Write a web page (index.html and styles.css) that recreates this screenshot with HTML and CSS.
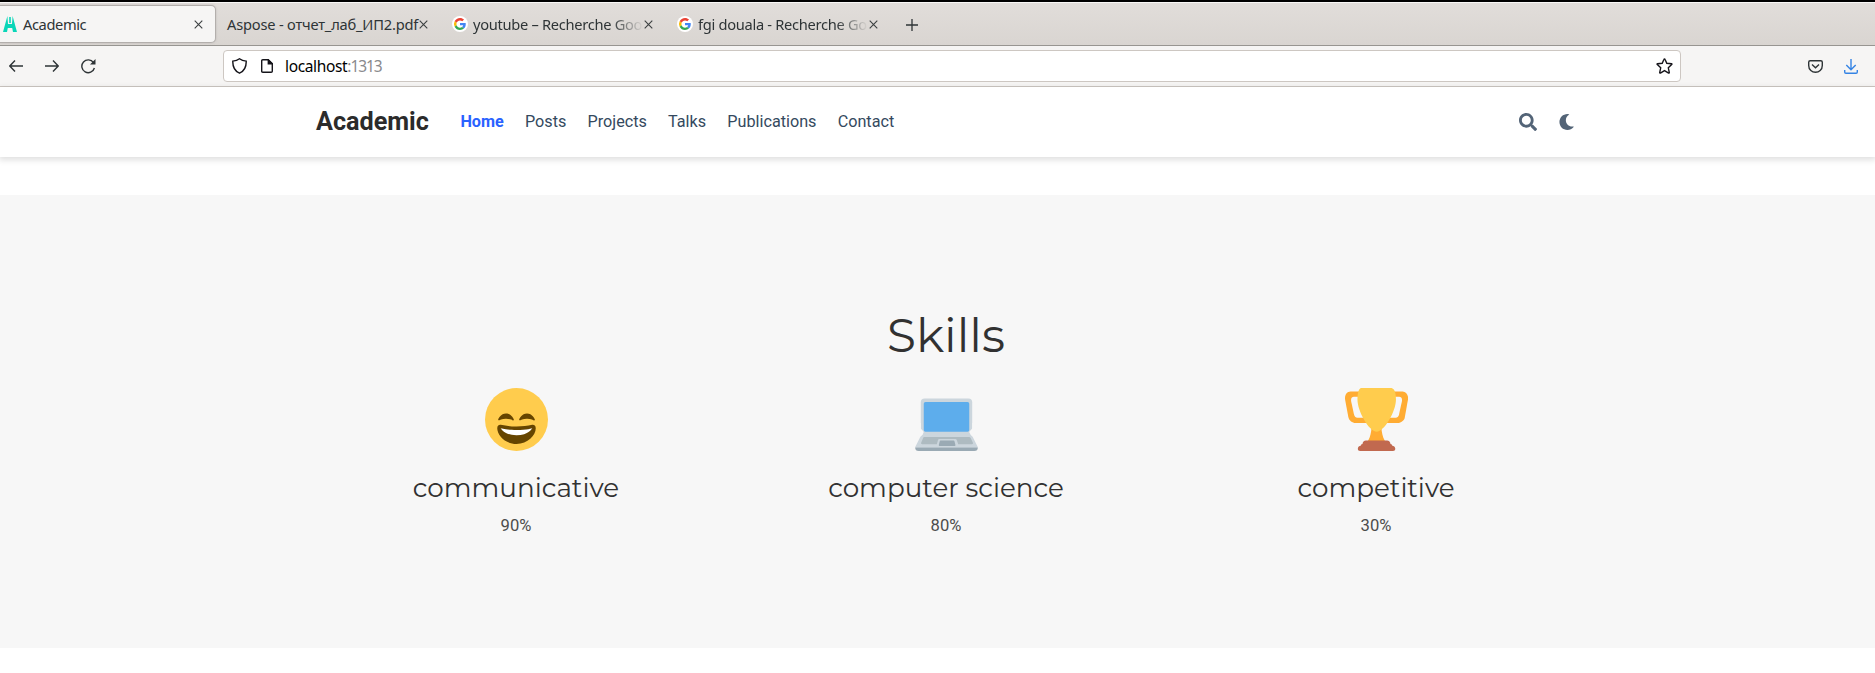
FILE: index.html
```html
<!DOCTYPE html>
<html lang="en">
<head>
<meta charset="utf-8">
<title>Academic</title>
<link rel="stylesheet" href="styles.css">
</head>
<body>
<svg width="0" height="0" class="defs">
  <symbol id="x" viewBox="0 0 9 9"><path d="M.7.7l7.6 7.6M8.3.7L.7 8.3" fill="none" stroke="#3b3f40" stroke-width="1.1"/></symbol>
  <symbol id="google" viewBox="0 0 16 16"><circle cx="8" cy="8" r="8" fill="#fff"/><g transform="translate(2 2) scale(.25)"><path fill="#ea4335" d="M24 9.5c3.5 0 6.700 1.200 9.200 3.600l6.900-6.900C35.900 2.400 30.500 0 24 0 14.600 0 6.500 5.400 2.600 13.200l8 6.200C12.400 13.700 17.700 9.500 24 9.500z"/><path fill="#4285f4" d="M47 24.500c0-1.600-.2-3.100-.4-4.500H24v9h12.900c-.6 3-2.300 5.500-4.800 7.200l7.700 6C44.400 38 47 31.800 47 24.500z"/><path fill="#fbbc05" d="M10.500 28.600a14.500 14.500 0 010-9.200l-8-6.200a24 24 0 000 21.600z"/><path fill="#34a853" d="M24 48c6.500 0 11.900-2.100 15.900-5.800l-7.700-6C30 37.600 27.200 38.500 24 38.500c-6.300 0-11.600-4.200-13.500-9.900l-8 6.200C6.500 42.600 14.600 48 24 48z"/></g></symbol>
</svg>

<header class="tabs">
  <div class="tab active">
    <svg class="fav" width="14" height="16" viewBox="0 0 14 16"><path fill="#0ad6b8" d="M4.400 0L5 8h4l.6-8L14 16h-4l-.8-4H4.800L4 16H0zM6.200 1h1.600v6H6.200z"/></svg>
    <span class="title t1">Academic</span>
    <svg class="close" width="9" height="9"><use href="#x"/></svg>
  </div>
  <div class="tab second"><span class="title t2">Aspose - отчет_лаб_ИП2.pdf</span><svg class="close" width="9" height="9"><use href="#x"/></svg></div>
  <div class="tab third"><svg class="fav" width="16" height="16"><use href="#google"/></svg><span class="title fade t3">youtube – Recherche Goog</span><svg class="close" width="9" height="9"><use href="#x"/></svg></div>
  <div class="tab fourth"><svg class="fav" width="16" height="16"><use href="#google"/></svg><span class="title fade t4">fgi douala - Recherche Go</span><svg class="close" width="9" height="9"><use href="#x"/></svg></div>
  <svg class="plus" width="12" height="12" viewBox="0 0 12 12"><path d="M6 0v12M0 6h12" stroke="#2e3436" stroke-width="1.3"/></svg>
</header>

<div class="toolbar">
  <div class="history">
    <svg width="14" height="12" viewBox="0 0 14 12"><path d="M14 6H1M6 .6L.8 6 6 11.400"/></svg>
    <svg width="14" height="12" viewBox="0 0 14 12"><path d="M0 6h13M8 .6L13.200 6 8 11.400"/></svg>
    <svg width="15" height="15" viewBox="0 0 15 15"><path d="M12.500 3.600A6.400 6.400 0 1 0 13.400 9"/><path d="M14.500 0v5.500H9z" fill="#2e3436" stroke="none"/></svg>
  </div>
  <div class="address">
    <svg width="15" height="16" viewBox="0 0 15 16"><path d="M7.500.8C5.500 2.400 3.200 3 .8 3.100c-.2 5.600 1.900 10 6.700 12.100 4.800-2.100 6.900-6.500 6.700-12.100C11.800 3 9.500 2.400 7.500.8z"/></svg>
    <svg class="page-icon" width="12" height="14" viewBox="0 0 12 14"><path d="M1.800.7H7l4.300 4.200v7.300q0 1.100-1.100 1.100H1.800Q.7 13.300.7 12.200V1.800Q.7.7 1.800.7z"/><path d="M6.600 0H7.500L12 4.500V5.400H6.600z" fill="#15141a" stroke="none"/></svg>
    <span class="url">localhost<span class="port">:1313</span></span>
    <svg class="star" width="17" height="16" viewBox="0 0 17 16"><path d="M8.500 1q.4 0 .6.500L10.800 5.300l4.700.5q.8.200.2.800l-3.400 3.200 1 4.700q0 .8-.7.500L8.500 12.600 4.400 15q-.7.300-.7-.5l1-4.700L1.300 6.600Q.7 6 1.500 5.800l4.700-.5L7.900 1.500Q8.100 1 8.500 1z"/></svg>
  </div>
  <div class="actions">
    <svg width="15" height="13" viewBox="0 0 15 13"><path d="M2.200.7h10.600q1.500 0 1.500 1.500v3.200c0 9.200-13.600 9.200-13.600 0V2.200Q.7.7 2.200.7z"/><path d="M4 4.500l3.500 3.300L11 4.500"/></svg>
    <svg class="download" width="14" height="15" viewBox="0 0 14 15"><path d="M7 0v10.500M2.300 6L7 10.700 11.700 6M.7 11v2q0 1.200 1.200 1.200h10.200q1.200 0 1.200-1.200v-2"/></svg>
  </div>
</div>

<nav class="navbar">
  <a class="brand">Academic</a>
  <div class="links"><a class="current">Home</a><a>Posts</a><a>Projects</a><a>Talks</a><a>Publications</a><a>Contact</a></div>
  <div class="tools">
    <svg width="18" height="18" viewBox="0 0 512 512"><path d="M505 442.700L405.300 343c-4.500-4.500-10.600-7-17-7H372c27.600-35.300 44-79.700 44-128C416 93.100 322.900 0 208 0S0 93.100 0 208s93.100 208 208 208c48.300 0 92.700-16.400 128-44v16.300c0 6.400 2.500 12.500 7 17l99.700 99.700c9.400 9.400 24.600 9.400 33.900 0l28.300-28.300c9.400-9.400 9.400-24.600.1-34zM208 336c-70.700 0-128-57.200-128-128 0-70.700 57.200-128 128-128 70.700 0 128 57.200 128 128 0 70.700-57.200 128-128 128z"/></svg>
    <svg class="moon" width="16" height="16" viewBox="27 0 485 512"><path d="M283.200 512c79 0 151.100-35.900 198.900-94.800 7.100-8.700-.6-21.500-11.600-19.400-124.200 23.700-238.300-71.600-238.300-197 0-72.200 38.700-138.600 101.500-174.400 9.700-5.500 7.300-20.200-3.800-22.200A258.200 258.200 0 00283.200 0c-141.300 0-256 114.500-256 256 0 141.300 114.500 256 256 256z"/></svg>
  </div>
</nav>

<main class="skills">
  <h1>Skills</h1>
  <div class="grid">
    <section class="skill">
      <svg class="emoji" viewBox="0 0 36 36"><circle cx="18" cy="18" r="18" fill="#ffcc4d"/><path fill="#664500" d="M28.457 17.797c-.06-.135-1.499-3.297-4.457-3.297-2.957 0-4.397 3.162-4.457 3.297-.092.207-.032.449.145.591.175.142.426.147.610.014.012-.009 1.262-.902 3.702-.902 2.426 0 3.674.881 3.702.901.088.066.194.099.298.099.110 0 .221-.037.312-.109.177-.142.238-.386.145-.594zm-12 0c-.06-.135-1.499-3.297-4.457-3.297-2.957 0-4.397 3.162-4.457 3.297-.092.207-.032.449.144.591.176.142.427.147.610.014.013-.009 1.262-.902 3.703-.902 2.426 0 3.674.881 3.702.901.090.066.195.099.298.099.110 0 .221-.037.312-.109.178-.142.237-.386.145-.594zM18 22c-3.623 0-6.027-.422-9-1-.679-.131-2 0-2 2 0 4 4.595 9 11 9 6.404 0 11-5 11-9 0-2-1.321-2.132-2-2-2.973.578-5.377 1-9 1z"/><path fill="#fff" d="M9 23s3 1 9 1 9-1 9-1-2 4-9 4-9-4-9-4z"/></svg>
      <h2>communicative</h2><p>90%</p>
    </section>
    <section class="skill">
      <svg class="emoji" viewBox="0 0 36 36"><path fill="#ccd6dd" d="M34.300 30L31.200 25.700C30.500 24.500 32.700 24 32.700 22.500V8.200A2.200 2.200 0 0030.500 6h-25a2.200 2.200 0 00-2.200 2.200v14.300c0 1.500 2.200 2 1.500 3.200L0 34h36z"/><path fill="#f7f7f7" d="M0 20h3.300v2.500q0 3.500 1 4L0 35zM36 20h-3.300v2.500q0 3.500-1 4L36 35z"/><path fill="#ccd6dd" d="M4.500 27h27q1 0 1.500 1l3 6H0l3-6q.5-1 1.500-1z"/><path fill="#9aaab4" d="M.1 34h35.800a2 2 0 01-2 2H2.100a2 2 0 01-2-2z"/><rect x="5" y="8" width="26" height="17" rx="1" fill="#5dadec"/><path fill="#aebbc1" d="M5.200 28h25.600q.8 0 1.100.7l1.200 2.600q.3.800-.6.800h-7.800l-.8-2.300q-.2-.6-.8-.6H13.900q-.6 0-.8.6l-.6 2.300H4.100q-.9 0-.6-.8l1.100-2.600q.2-.7.600-.7z"/><path fill="#9aaab4" d="M14.600 30h7.400q.5 0 .6.500l.5 2.100q.1.600-.5.600h-8.500q-.6 0-.5-.6l.5-2.100q.1-.5.500-.5z"/></svg>
      <h2>computer science</h2><p>80%</p>
    </section>
    <section class="skill">
      <svg class="emoji" viewBox="0 0 36 36"><path fill="#ffac33" d="M5.123 5h6C12.227 5 13 4.896 13 6V4c0-1.104-.773-2-1.877-2h-8c-2 0-3.583 2.125-3 5 0 0 1.791 9.375 1.917 9.958C2.373 18.500 4.164 20 6.081 20h6.958c1.105 0-.039-1.896-.039-3v-2c0 1.104-.773 2-1.877 2h-4c-1.104 0-1.833-1.042-2-2S3.539 7.667 3.539 7.667C3.206 5.750 4.018 5 5.123 5zm25.812 0h-6C23.831 5 22 4.896 22 6V4c0-1.104 1.831-2 2.935-2h8c2 0 3.584 2.125 3 5 0 0-1.633 9.419-1.771 10-.354 1.500-2.042 3-4 3h-7.146C21.914 20 22 18.104 22 17v-2c0 1.104 1.831 2 2.935 2h4c1.104 0 1.834-1.042 2-2s1.584-7.333 1.584-7.333C32.851 5.750 32.040 5 30.935 5zM20.832 22c0-6.958-2.709 0-2.709 0s-3-6.958-3 0-3.291 10-3.291 10h12.292c-.001 0-3.292-3.042-3.292-10z"/><path fill="#ffcc4d" d="M29.123 6.577c0 6.775-6.770 18.423-11 18.423-4.231 0-11-11.649-11-18.423C7.123.748 8.623 0 9.623 0h16.500c1.249 0 3 .829 3 6.577z"/><path fill="#c1694f" d="M27 33c0-.552-.448-1-1-1 0-1.105-.895-2-2-2H12c-1.105 0-2 .895-2 2-.552 0-1 .448-1 1-.8 0-1.667.7-1.667 1.700 0 .8.500 1.300 1.300 1.300h18.800c.8 0 1.300-.5 1.300-1.300C28.733 33.700 27.800 33 27 33z"/></svg>
      <h2>competitive</h2><p>30%</p>
    </section>
  </div>
</main>
</body>
</html>
```
FILE: styles.css
```css
* { box-sizing: border-box; }
body { margin: 0; height: 673px; overflow: hidden; background: #fff; font-family: Roboto, sans-serif; }
svg { display: block; flex: none; }
.defs { display: none; }
.tabs { height: 46px; display: flex; align-items: flex-start; border-top: 2px solid #000; border-bottom: 1px solid #979591; background: linear-gradient(#f8f7f6 0, #f8f7f6 1px, #e1ddda 1px, #d9d5d1 100%); font-family: "Noto Sans", sans-serif; font-size: 14.67px; color: #2e3436; }
.tab { height: 38px; margin-top: 3px; display: flex; align-items: center; flex: none; white-space: nowrap; }
.active { width: 216px; padding-left: 3px; background: #f6f5f4; border: 1px solid #b3afac; border-left: 0; border-radius: 0 5px 5px 0; box-shadow: 0 0 2px #99959580; }
.title { line-height: 20px; }
.close { margin-left: auto; }
.active .close { margin-right: 12px; }
.t1 { margin-left: 6px; letter-spacing: -.4px; }
.second { width: 212px; padding-left: 11px; }
.t2 { letter-spacing: -.2px; }
.third, .fourth { width: 225px; padding-left: 24px; }
.third .title, .fourth .title { margin-left: 5px; width: 170px; letter-spacing: -.3px; }
.fade { -webkit-mask-image: linear-gradient(90deg, #000 138px, transparent 170px); mask-image: linear-gradient(90deg, #000 138px, transparent 170px); }
.plus { margin: 17px 0 0 28px; }
.toolbar { height: 41px; display: flex; align-items: center; background: #f6f5f4; border-bottom: 1px solid #cdc7c2; }
.toolbar svg { fill: none; stroke: #2e3436; stroke-width: 1.4; }
.history { display: flex; align-items: center; width: 223px; padding-left: 9px; gap: 22px; }
.address { width: 1458px; height: 32px; display: flex; align-items: center; background: #fff; border: 1px solid #cdc7c2; border-radius: 4px; padding: 0 7px 0 8px; }
.toolbar .address svg { stroke: #15141a; }
.page-icon { margin-left: 14px; }
.url { margin-left: 12px; font: 15.5px/20px "Noto Sans", sans-serif; letter-spacing: -.35px; }
.port { color: #8a8a8d; letter-spacing: -1.1px; }
.star { margin-left: auto; }
.actions { margin-left: 127px; display: flex; align-items: center; gap: 21px; }
.toolbar .download { stroke: #3584e4; }
.navbar { position: relative; height: 70px; padding: 0 300px 1px 316px; display: flex; align-items: center; box-shadow: 0 2px 6px 1px #00000020; background: #fff; }
.brand { font-size: 25.2px; font-weight: 700; color: #2b2b2b; }
.links { display: flex; gap: 21.2px; margin-left: 31.5px; font-size: 16.2px; color: #34495e; }
.current { color: #2962ff; font-weight: 700; }
.tools { display: flex; align-items: center; gap: 22px; margin-left: auto; fill: #536477; }
.skills { margin-top: 38px; height: 453px; background: #f7f7f7; padding: 112px 284px 0 301px; color: #313131; }
h1, h2, p { margin: 0; text-align: center; }
h1, h2 { font-family: Montserrat, Inter, sans-serif; font-weight: 400; }
h1 { height: 58px; font-size: 47px; line-height: 58px; }
.grid { display: grid; grid-template-columns: repeat(3, 430px); margin-top: 23px; }
.skill { display: flex; flex-direction: column; align-items: center; }
.emoji { width: 63px; height: 63px; }
h2 { margin-top: 20px; font-size: 26.2px; line-height: 34px; white-space: nowrap; }
p { margin-top: 10px; font-size: 16.6px; line-height: 22px; color: #4c4c4c; }
```
